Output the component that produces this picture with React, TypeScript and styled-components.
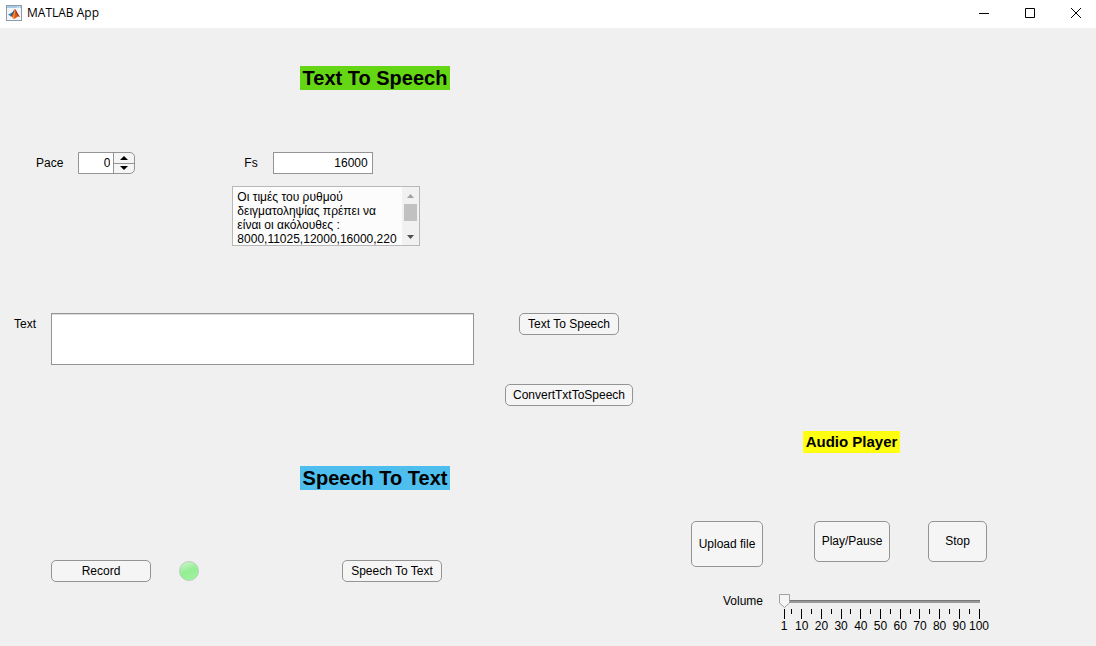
import React, { useState } from "react";
import styled, { createGlobalStyle } from "styled-components";

const GlobalStyle = createGlobalStyle`
  *, *::before, *::after { box-sizing: border-box; }
  html, body { margin: 0; }
  body {
    background: #f0f0f0;
    color: #000;
    font: 12px/14px "Liberation Sans", Arial, Helvetica, sans-serif;
  }
  button, input, textarea { font: inherit; color: inherit; }
`;

const Window = styled.div`
  display: flex;
  flex-direction: column;
  min-height: 100vh;
`;

const TitleBar = styled.header`
  display: flex;
  align-items: center;
  gap: 5px;
  height: 28px;
  padding-left: 6px;
  padding-bottom: 3px;
  background: #fff;
  font: 12px/16px "Open Sans", "Noto Sans", sans-serif;
`;

const AppName = styled.span`
  flex: 1;
`;

const CaptionButton = styled.button`
  display: flex;
  align-items: center;
  justify-content: center;
  width: 46px;
  height: 24px;
  padding: 0;
  border: 0;
  background: none;
`;

const CaptionButtons = styled.div`
  display: flex;
  margin-right: -3px;
`;

const Canvas = styled.main`
  flex: 1;
  display: grid;
  grid-template-columns: minmax(640px, 1fr) 405px;
`;

const Speech = styled.div`
  display: flex;
  flex-direction: column;
  padding-top: 38px;
`;

const Player = styled.section`
  display: flex;
  flex-direction: column;
  padding-top: 403px;
`;

const SectionTitle = styled.h1<{ $color: string }>`
  width: 150px;
  margin: 0 0 0 300px;
  background: ${(p) => p.$color};
  font-size: 20px;
  line-height: 24px;
  text-align: center;
  white-space: nowrap;
`;

const PlayerTitle = styled.h2`
  width: 97px;
  margin: 0 0 0 112px;
  background: #ffff12;
  font-size: 15px;
  line-height: 22px;
  text-align: center;
  white-space: nowrap;
`;

const SettingsRow = styled.div`
  display: flex;
  align-items: flex-start;
  margin-top: 62px;
  padding-left: 36px;
`;

const Field = styled.div<{ $gap: number }>`
  display: flex;
  align-items: flex-start;
  gap: ${(p) => p.$gap}px;
`;

const Label = styled.label`
  line-height: 22px;
`;

const Spinner = styled.div`
  display: flex;
  width: 57px;
  height: 22px;
  border: 1px solid #949494;
  border-radius: 0 5px 5px 0;
  background: #f5f5f5;
  overflow: hidden;
`;

const SpinnerInput = styled.input`
  flex: 1;
  min-width: 0;
  padding: 0 3px;
  border: 0;
  border-right: 1px solid #949494;
  background: #fff;
  text-align: right;
`;

const SpinnerButtons = styled.div`
  display: flex;
  flex-direction: column;
  width: 20px;
`;

const StepButton = styled.button`
  flex: 1;
  display: flex;
  align-items: center;
  justify-content: center;
  padding: 0;
  border: 0;
  background: none;

  & + & { border-top: 1px solid #949494; }
`;

const NumberInput = styled.input`
  width: 100px;
  height: 22px;
  padding: 0 4px;
  border: 1px solid #949494;
  border-radius: 0;
  background: #fff;
  text-align: right;
`;

const RateSettings = styled.div`
  display: flex;
  flex-direction: column;
  gap: 12px;
  margin-left: 97px;
`;

const RateField = styled(Field)`
  padding-left: 12px;
`;

const NoteBox = styled.div`
  display: flex;
  width: 188px;
  height: 60px;
  border: 1px solid #b8b8b8;
  background: #fcfcfc;
`;

const NoteText = styled.textarea`
  flex: 1;
  min-width: 0;
  padding: 3px 4px 0;
  border: 0;
  background: none;
  line-height: 14px;
  resize: none;
  overflow: hidden;
`;

const ScrollBar = styled.div`
  display: flex;
  flex-direction: column;
  width: 17px;
  background: #f1f1f1;
`;

const ScrollButton = styled.button`
  display: flex;
  align-items: center;
  justify-content: center;
  height: 17px;
  padding: 0;
  border: 0;
  background: none;
`;

const ScrollTrack = styled.div`
  flex: 1;
  padding: 0 2px;
`;

const ScrollThumb = styled.div`
  height: 17px;
  background: #c1c1c1;
`;

const TextRow = styled.div`
  display: flex;
  align-items: flex-start;
  margin-top: 67px;
  padding-left: 14px;
`;

const TextInput = styled.textarea`
  display: block;
  width: 423px;
  height: 52px;
  padding: 4px;
  border: 1px solid #949494;
  border-radius: 0;
  background: #fff;
  box-shadow: inset 0 1px 0 #dcdcdc;
  resize: none;
`;

const Actions = styled.div`
  display: flex;
  flex-direction: column;
  align-items: center;
  gap: 49px;
  margin-left: 31px;
`;

const Button = styled.button<{ $w: number; $h?: number }>`
  width: ${(p) => p.$w}px;
  height: ${(p) => p.$h ?? 22}px;
  padding: 0 0 1px;
  border: 1px solid #949494;
  border-radius: 5px;
  background: #f5f5f5;
  white-space: nowrap;
`;

const Recognition = styled.section`
  margin-top: 60px;
`;

const RecordRow = styled.div`
  display: flex;
  align-items: center;
  margin-top: 70px;
  padding-left: 51px;
`;

const Lamp = styled.span`
  width: 20px;
  height: 20px;
  margin: 0 143px 0 28px;
  border: 1px solid #b5d3b5;
  border-radius: 50%;
  background: linear-gradient(160deg, #c3f3c3 10%, #93ee93 50%, #a0f5a0 100%);
`;

const PlayerButtons = styled.div`
  display: flex;
  align-items: flex-start;
  margin-top: 68px;
`;

const PlayButton = styled(Button)`
  margin: 0 38px 0 51px;
`;

const VolumeRow = styled.div`
  display: flex;
  align-items: flex-start;
  gap: 16px;
  margin-top: 23px;
  padding-left: 32px;
`;

const Slider = styled.div`
  width: 206px;
  padding-top: 4px;
`;

const thumbImage = `url("data:image/svg+xml,%3Csvg xmlns='http://www.w3.org/2000/svg' width='11' height='14'%3E%3Cpath d='M.5.5h10v8.5l-5 4.5-5-4.5z' fill='%23f5f5f5' stroke='%23a0a0a0'/%3E%3C/svg%3E")`;

const Range = styled.input`
  appearance: none;
  display: block;
  width: 100%;
  height: 14px;
  margin: 0;
  background: linear-gradient(#777 1px, #999 1px) center / calc(100% - 11px) 3px no-repeat;

  &::-webkit-slider-thumb {
    appearance: none;
    width: 11px;
    height: 14px;
    border: 0;
    background: ${thumbImage} no-repeat;
  }
`;

const Scale = styled.svg`
  display: block;
  width: 195px;
  height: 26px;
  margin: 1px 0 0 5px;
  overflow: visible;
`;

const MatlabIcon = () => (
  <svg width="16" height="16" viewBox="0 0 16 16" aria-hidden="true">
    <rect x=".5" y=".5" width="15" height="15" fill="#f3f5f8" stroke="#8b9bac" />
    <path d="M1 1h14v2H1z" fill="#a9c8e4" />
    <path d="M11 2h1M13 2h1" stroke="#fff" />
    <path d="M2 9.5 5.3 8 7 9.7 4.8 11.5z" fill="#3f87bd" />
    <path d="M5.3 8C7 7.4 7.8 4.7 9 4L7 10.5 4.8 11.5z" fill="#295b83" />
    <path d="M9 4c1.500 1.500 2.500 5 5 8-1.500-.6-2.300-.5-3.500.4L8 14 5 11c2-.5 2.800-4.500 4-7z" fill="#d9541e" />
    <path d="M9 4c.4 3-.2 6-1 10L6.500 12.200C8 10 8 6.500 9 4z" fill="#f49b32" />
    <path d="M9 4c1.500 1.500 2.500 5 5 8-2-1-3-2-3.500-3.500z" fill="#9e2818" />
  </svg>
);

const Arrow = ({ down, color = "#000", w = 8 }: { down?: boolean; color?: string; w?: number }) => (
  <svg width={w} height="4" viewBox="0 0 8 4" preserveAspectRatio="none" aria-hidden="true">
    <path d={down ? "M0 0h8L4 4z" : "M0 4h8L4 0z"} fill={color} />
  </svg>
);

const MIN = 1;
const MAX = 100;
const majorTicks = [1, 10, 20, 30, 40, 50, 60, 70, 80, 90, 100];
const minorTicks = [5, 15, 25, 35, 45, 55, 65, 75, 85, 95];
const place = (value: number) => `${((value - MIN) / (MAX - MIN)) * 100}%`;

const VolumeScale = () => (
  <Scale aria-hidden="true">
    <g stroke="#000" shapeRendering="crispEdges">
      {majorTicks.map((v) => (
        <line key={v} x1={place(v)} x2={place(v)} y1="0" y2="10" />
      ))}
      {minorTicks.map((v) => (
        <line key={v} x1={place(v)} x2={place(v)} y1="0" y2="5" />
      ))}
    </g>
    {majorTicks.map((v) => (
      <text key={v} x={place(v)} y="21" textAnchor="middle">
        {v}
      </text>
    ))}
  </Scale>
);

const rateNote =
  "Οι τιμές του ρυθμού δειγματοληψίας πρέπει να είναι οι ακόλουθες : 8000,11025,12000,16000,22050";

export default function App() {
  const [pace, setPace] = useState(0);
  const [volume, setVolume] = useState(MIN);

  return (
    <Window>
      <GlobalStyle />
      <TitleBar>
        <MatlabIcon />
        <AppName>MATLAB App</AppName>
        <CaptionButtons>
          <CaptionButton aria-label="Minimize">
            <svg width="10" height="10" stroke="#000"><path d="M0 5.500h10" /></svg>
          </CaptionButton>
          <CaptionButton aria-label="Maximize">
            <svg width="10" height="10" stroke="#000" fill="none"><path d="M.5.5h9v9h-9z" /></svg>
          </CaptionButton>
          <CaptionButton aria-label="Close">
            <svg width="10" height="10" stroke="#000"><path d="M0 0l10 10M10 0L0 10" /></svg>
          </CaptionButton>
        </CaptionButtons>
      </TitleBar>
      <Canvas>
        <Speech>
          <section>
            <SectionTitle $color="#65d613">Text To Speech</SectionTitle>
            <SettingsRow>
              <Field $gap={15}>
                <Label htmlFor="pace">Pace</Label>
                <Spinner>
                  <SpinnerInput
                    id="pace"
                    inputMode="numeric"
                    value={pace}
                    onChange={(e) => setPace(Number(e.target.value) || 0)}
                  />
                  <SpinnerButtons>
                    <StepButton aria-label="Increase pace" onClick={() => setPace(pace + 1)}>
                      <Arrow />
                    </StepButton>
                    <StepButton aria-label="Decrease pace" onClick={() => setPace(pace - 1)}>
                      <Arrow down />
                    </StepButton>
                  </SpinnerButtons>
                </Spinner>
              </Field>
              <RateSettings>
                <RateField $gap={15}>
                  <Label htmlFor="fs">Fs</Label>
                  <NumberInput id="fs" inputMode="numeric" defaultValue="16000" />
                </RateField>
                <NoteBox>
                  <NoteText aria-label="Fs values" readOnly value={rateNote} />
                  <ScrollBar>
                    <ScrollButton aria-label="Scroll up">
                      <Arrow color="#a3a3a3" w={7} />
                    </ScrollButton>
                    <ScrollTrack>
                      <ScrollThumb />
                    </ScrollTrack>
                    <ScrollButton aria-label="Scroll down">
                      <Arrow down color="#505050" w={7} />
                    </ScrollButton>
                  </ScrollBar>
                </NoteBox>
              </RateSettings>
            </SettingsRow>
            <TextRow>
              <Field $gap={15}>
                <Label htmlFor="text">Text</Label>
                <TextInput id="text" />
              </Field>
              <Actions>
                <Button $w={100}>Text To Speech</Button>
                <Button $w={128}>ConvertTxtToSpeech</Button>
              </Actions>
            </TextRow>
          </section>
          <Recognition>
            <SectionTitle $color="#4dbeee">Speech To Text</SectionTitle>
            <RecordRow>
              <Button $w={100}>Record</Button>
              <Lamp />
              <Button $w={100}>Speech To Text</Button>
            </RecordRow>
          </Recognition>
        </Speech>
        <Player>
          <PlayerTitle>Audio Player</PlayerTitle>
          <PlayerButtons>
            <Button $w={72} $h={46}>Upload file</Button>
            <PlayButton $w={76} $h={41}>Play/Pause</PlayButton>
            <Button $w={59} $h={41}>Stop</Button>
          </PlayerButtons>
          <VolumeRow>
            <Label htmlFor="volume">Volume</Label>
            <Slider>
              <Range
                id="volume"
                type="range"
                min={MIN}
                max={MAX}
                value={volume}
                onChange={(e) => setVolume(Number(e.target.value))}
              />
              <VolumeScale />
            </Slider>
          </VolumeRow>
        </Player>
      </Canvas>
    </Window>
  );
}
